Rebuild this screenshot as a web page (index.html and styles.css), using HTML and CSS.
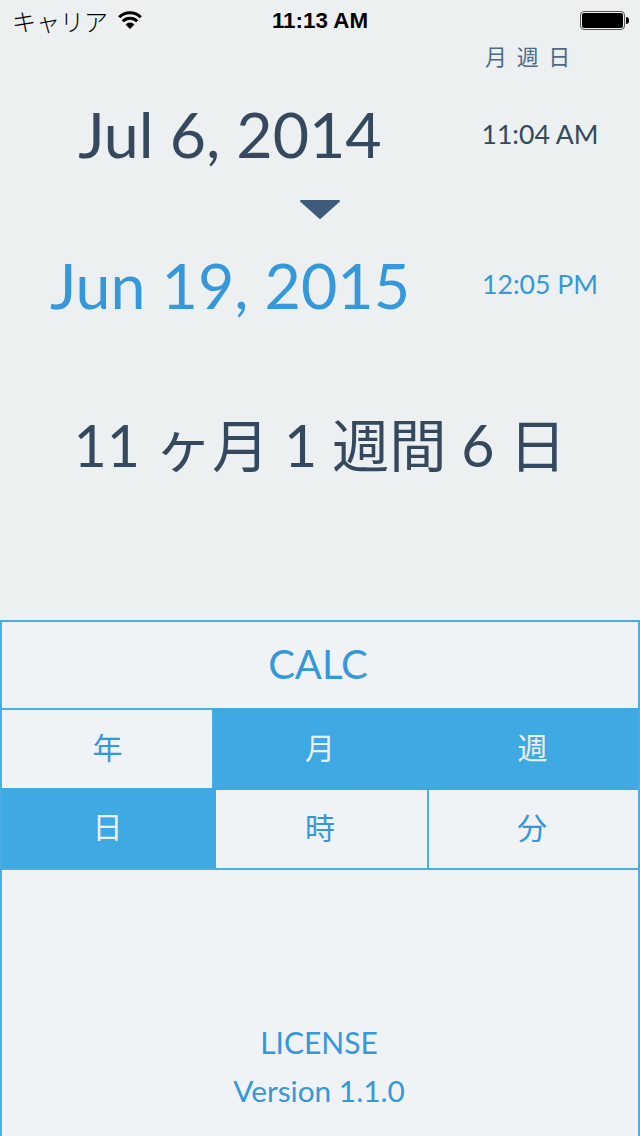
FILE: index.html
```html
<!DOCTYPE html>
<html lang="ja">
<head>
<meta charset="UTF-8">
<title>CALC</title>
<link rel="stylesheet" href="styles.css">
</head>
<body>
  <div class="status-bar">
    <div class="status-left">
      <span class="carrier">キャリア</span>
      <svg class="wifi" width="26" height="20" viewBox="0 0 26 20">
        <path d="M13 19 L8.6 14.4 A6.2 6.2 0 0 1 17.4 14.4 Z" fill="#000"/>
        <path d="M5.8 11.2 A10.2 10.2 0 0 1 20.2 11.2" fill="none" stroke="#000" stroke-width="3"/>
        <path d="M2.2 7.2 A15.3 15.3 0 0 1 23.8 7.2" fill="none" stroke="#000" stroke-width="3"/>
      </svg>
    </div>
    <div class="status-time">11:13 AM</div>
    <div class="status-right">
      <div class="battery"><div class="battery-fill"></div></div>
      <div class="battery-tip"></div>
    </div>
  </div>

  <div class="unit-labels">月 週 日</div>

  <div class="date-row date-from">
    <div class="date">Jul 6, 2014</div>
    <div class="time">11:04 AM</div>
  </div>

  <div class="arrow-row">
    <svg width="40" height="20" viewBox="0 0 40 20">
      <path d="M1 2 H39 L20 19 Z" fill="#3f5d7a" stroke="#3f5d7a" stroke-width="2" stroke-linejoin="round"/>
    </svg>
  </div>

  <div class="date-row date-to">
    <div class="date">Jun 19, 2015</div>
    <div class="time">12:05 PM</div>
  </div>

  <div class="result">11 ヶ月 1 週間 6 日</div>

  <div class="panel">
    <div class="calc">CALC</div>
    <div class="unit-row first-row">
      <div class="unit">年</div>
      <div class="unit on">月</div>
      <div class="unit on">週</div>
    </div>
    <div class="unit-row second-row">
      <div class="unit on">日</div>
      <div class="unit">時</div>
      <div class="unit">分</div>
    </div>
    <div class="footer">
      <div class="license">LICENSE</div>
      <div class="version">Version 1.1.0</div>
    </div>
  </div>
</body>
</html>
```

FILE: styles.css
```css
body {
  margin: 0;
  width: 640px;
  height: 1136px;
  overflow: hidden;
  background-color: #ecf0f1;
  color: #34495e;
  font-family: Lato, "Noto Sans CJK JP", sans-serif;
}

.status-bar {
  display: flex;
  align-items: center;
  justify-content: space-between;
  height: 40px;
  padding: 0 11px 0 12px;
  color: #000;
  position: relative;
}

.status-left {
  display: flex;
  align-items: center;
  gap: 9px;
}

.carrier {
  font-family: "Noto Sans CJK JP", sans-serif;
  font-size: 24px;
  font-weight: 300;
}

.status-time {
  position: absolute;
  left: 0;
  right: 0;
  padding-top: 2px;
  text-align: center;
  font-family: "Liberation Sans", sans-serif;
  font-size: 22.4px;
  font-weight: 700;
}

.status-right {
  display: flex;
  align-items: center;
  margin-top: 1px;
}

.battery {
  width: 45px;
  height: 19px;
  box-sizing: border-box;
  border: 1px solid #555;
  border-radius: 4px;
  padding: 1px;
}

.battery-fill {
  height: 100%;
  background-color: #000;
  border-radius: 2px;
}

.battery-tip {
  width: 3px;
  height: 7px;
  margin-left: 1px;
  background-color: #000;
  border-radius: 0 3px 3px 0;
}

.unit-labels {
  height: 34px;
  line-height: 34px;
  padding-left: 485px;
  font-size: 22px;
  color: #4d6a87;
  word-spacing: 4px;
}

.date-row {
  display: flex;
  align-items: center;
}

.date {
  width: 460px;
  text-align: center;
  font-size: 62.7px;
}

.time {
  width: 160px;
  text-align: center;
  font-size: 26.6px;
}

.date-from {
  height: 118px;
}

.arrow-row {
  display: flex;
  justify-content: center;
  height: 22px;
  padding-top: 7px;
}

.date-to {
  height: 127px;
  color: #3498db;
}

.date-from .time {
  padding-top: 2px;
}

.date-to .time {
  padding-bottom: 2px;
}

.result {
  margin-top: 57px;
  text-align: center;
  font-size: 57.3px;
  line-height: 80px;
}

.panel {
  position: absolute;
  left: 0;
  right: 0;
  top: 620px;
  bottom: 0;
  display: flex;
  flex-direction: column;
  box-sizing: border-box;
  background-color: #eff3f5;
  border: 2px solid #4aaee6;
  border-bottom: 0;
  color: #3498db;
}

.calc {
  height: 86px;
  line-height: 84px;
  padding-right: 4px;
  text-align: center;
  font-size: 40px;
  border-bottom: 2px solid #4aaee6;
  flex-shrink: 0;
}

.unit-row {
  display: grid;
  height: 80px;
  flex-shrink: 0;
  border-bottom: 2px solid #4aaee6;
  box-sizing: border-box;
}

.first-row {
  grid-template-columns: 211px 213px 1fr;
}

.second-row {
  grid-template-columns: 214px 213px 1fr;
}

.unit {
  display: flex;
  align-items: center;
  justify-content: center;
  box-sizing: border-box;
  padding-bottom: 6px;
  font-size: 30px;
  border-right: 2px solid #4aaee6;
}

.first-row .unit {
  border-right-width: 1px;
  padding-left: 1px;
}

.second-row .unit {
  padding-right: 3px;
}

.unit:last-child {
  border-right: 0;
}

.unit.on {
  background-color: #3fa9e3;
  color: #ecf0f1;
  border-right: 0;
  margin-top: -2px;
}

.first-row .unit.on {
  margin-bottom: -2px;
}

.footer {
  flex: 1;
  display: flex;
  flex-direction: column;
  justify-content: flex-end;
  align-items: center;
  padding: 0 2px 21px 0;
}

.license {
  font-size: 30px;
  line-height: 48px;
  margin-bottom: 1px;
}

.version {
  font-size: 29.8px;
  line-height: 48px;
}
```
